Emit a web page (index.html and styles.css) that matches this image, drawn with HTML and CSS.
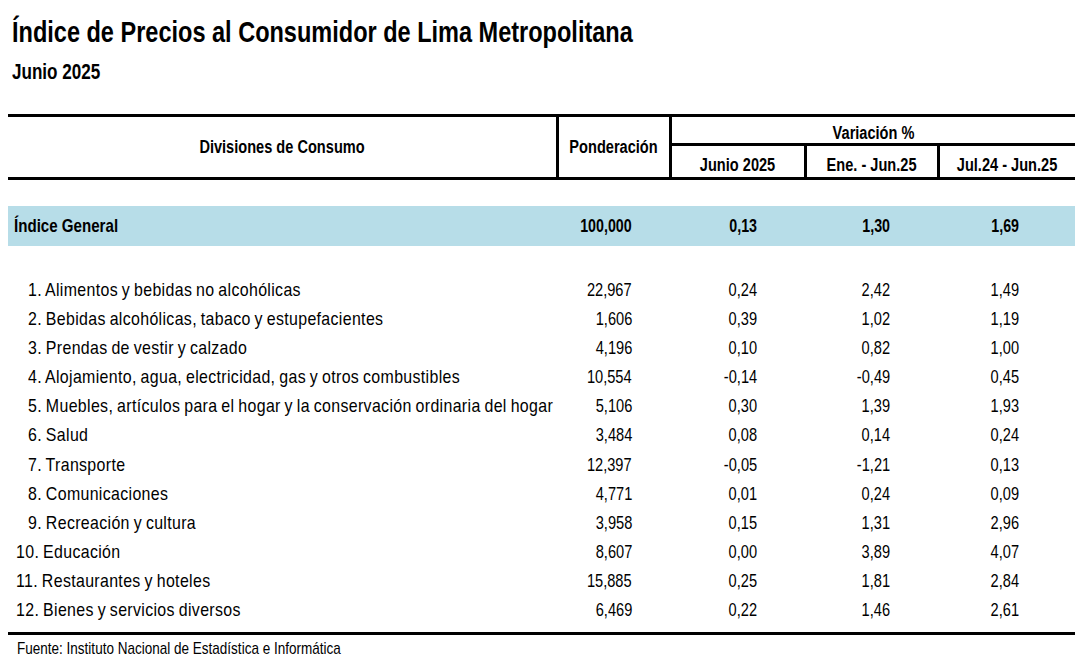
FILE: index.html
```html
<!DOCTYPE html>
<html lang="es">
<head>
<meta charset="utf-8">
<title>IPC Lima Metropolitana</title>
<link rel="stylesheet" href="styles.css">
</head>
<body>
<h1 class="title"><span class="t">Índice de Precios al Consumidor de Lima Metropolitana</span></h1>
<div class="subtitle"><span class="t">Junio 2025</span></div>
<table class="ipc">
  <colgroup>
    <col class="c-div"><col class="c-pond"><col class="c-m"><col class="c-e"><col class="c-j">
  </colgroup>
  <thead>
    <tr class="h1">
      <th rowspan="2" class="h-div"><span class="t">Divisiones de Consumo</span></th>
      <th rowspan="2" class="h-pond"><span class="t">Ponderación</span></th>
      <th colspan="3" class="h-var"><span class="t">Variación %</span></th>
    </tr>
    <tr class="h2">
      <th class="h-sub"><span class="t">Junio 2025</span></th>
      <th class="h-sub"><span class="t">Ene. - Jun.25</span></th>
      <th class="h-sub h-last"><span class="t">Jul.24 - Jun.25</span></th>
    </tr>
  </thead>
  <tbody>
    <tr class="gap1"><td colspan="5"></td></tr>
    <tr class="general">
      <td class="glbl"><span class="t">Índice General</span></td>
      <td class="n pond"><span class="t">100,000</span></td>
      <td class="n m"><span class="t">0,13</span></td>
      <td class="n e"><span class="t">1,30</span></td>
      <td class="n j"><span class="t">1,69</span></td>
    </tr>
    <tr class="gap2"><td colspan="5"></td></tr>
    <tr class="row"><td class="lbl one"><span class="t">1. Alimentos y bebidas no alcohólicas</span></td><td class="n pond"><span class="t">22,967</span></td><td class="n m"><span class="t">0,24</span></td><td class="n e"><span class="t">2,42</span></td><td class="n j"><span class="t">1,49</span></td></tr>
    <tr class="row"><td class="lbl one"><span class="t">2. Bebidas alcohólicas, tabaco y estupefacientes</span></td><td class="n pond"><span class="t">1,606</span></td><td class="n m"><span class="t">0,39</span></td><td class="n e"><span class="t">1,02</span></td><td class="n j"><span class="t">1,19</span></td></tr>
    <tr class="row"><td class="lbl one"><span class="t">3. Prendas de vestir y calzado</span></td><td class="n pond"><span class="t">4,196</span></td><td class="n m"><span class="t">0,10</span></td><td class="n e"><span class="t">0,82</span></td><td class="n j"><span class="t">1,00</span></td></tr>
    <tr class="row"><td class="lbl one"><span class="t">4. Alojamiento, agua, electricidad, gas y otros combustibles</span></td><td class="n pond"><span class="t">10,554</span></td><td class="n m"><span class="t">-0,14</span></td><td class="n e"><span class="t">-0,49</span></td><td class="n j"><span class="t">0,45</span></td></tr>
    <tr class="row"><td class="lbl one"><span class="t">5. Muebles, artículos para el hogar y la conservación ordinaria del hogar</span></td><td class="n pond"><span class="t">5,106</span></td><td class="n m"><span class="t">0,30</span></td><td class="n e"><span class="t">1,39</span></td><td class="n j"><span class="t">1,93</span></td></tr>
    <tr class="row"><td class="lbl one"><span class="t">6. Salud</span></td><td class="n pond"><span class="t">3,484</span></td><td class="n m"><span class="t">0,08</span></td><td class="n e"><span class="t">0,14</span></td><td class="n j"><span class="t">0,24</span></td></tr>
    <tr class="row"><td class="lbl one"><span class="t">7. Transporte</span></td><td class="n pond"><span class="t">12,397</span></td><td class="n m"><span class="t">-0,05</span></td><td class="n e"><span class="t">-1,21</span></td><td class="n j"><span class="t">0,13</span></td></tr>
    <tr class="row"><td class="lbl one"><span class="t">8. Comunicaciones</span></td><td class="n pond"><span class="t">4,771</span></td><td class="n m"><span class="t">0,01</span></td><td class="n e"><span class="t">0,24</span></td><td class="n j"><span class="t">0,09</span></td></tr>
    <tr class="row"><td class="lbl one"><span class="t">9. Recreación y cultura</span></td><td class="n pond"><span class="t">3,958</span></td><td class="n m"><span class="t">0,15</span></td><td class="n e"><span class="t">1,31</span></td><td class="n j"><span class="t">2,96</span></td></tr>
    <tr class="row"><td class="lbl two"><span class="t">10. Educación</span></td><td class="n pond"><span class="t">8,607</span></td><td class="n m"><span class="t">0,00</span></td><td class="n e"><span class="t">3,89</span></td><td class="n j"><span class="t">4,07</span></td></tr>
    <tr class="row"><td class="lbl two"><span class="t">11. Restaurantes y hoteles</span></td><td class="n pond"><span class="t">15,885</span></td><td class="n m"><span class="t">0,25</span></td><td class="n e"><span class="t">1,81</span></td><td class="n j"><span class="t">2,84</span></td></tr>
    <tr class="row"><td class="lbl two"><span class="t">12. Bienes y servicios diversos</span></td><td class="n pond"><span class="t">6,469</span></td><td class="n m"><span class="t">0,22</span></td><td class="n e"><span class="t">1,46</span></td><td class="n j"><span class="t">2,61</span></td></tr>
    <tr class="gap3"><td colspan="5"></td></tr>
  </tbody>
</table>
<p class="source"><span class="t">Fuente: Instituto Nacional de Estadística e Informática</span></p>
</body>
</html>
```

FILE: styles.css
```css
html, body {
  margin: 0;
  padding: 0;
  background: #ffffff;
  color: #000000;
}
body {
  width: 1075px;
  font-family: "Liberation Sans", Arial, sans-serif;
  overflow: hidden;
}
/* condensed text (Arial Narrow look) */
.t {
  display: inline-block;
  white-space: nowrap;
  transform-origin: left center;
}

.title {
  margin: 14px 0 0 12px;
  font-size: 30px;
  line-height: 36px;
  font-weight: bold;
}
.title .t { transform: scaleX(0.784); }

.subtitle {
  margin: 9px 0 0 12px;
  font-size: 22px;
  line-height: 26px;
  font-weight: bold;
}
.subtitle .t { transform: scaleX(0.776); }

.ipc {
  margin: 29px 0 0 8px;
  width: 1067px;
  border-collapse: collapse;
  table-layout: fixed;
}
.c-div { width: 549px; }
.c-pond { width: 113px; }
.c-m { width: 135px; }
.c-e { width: 133px; }
.c-j { width: 137px; }

.ipc th {
  font-weight: bold;
  font-size: 18px;
  line-height: 20px;
  padding: 0;
  text-align: center;
  vertical-align: middle;
}
.ipc th .t {
  transform-origin: center center;
  transform: scaleX(0.81);
}
.h1 th { border-top: 3px solid #000; }
.h-div { border-right: 3px solid #000; border-bottom: 3px solid #000; }
.h-pond { border-right: 3px solid #000; border-bottom: 3px solid #000; }
.h-var { height: 21px; border-bottom: 3px solid #000; }
.ipc th.h-var { padding-top: 5px; }
.h-sub { height: 25px; border-bottom: 3px solid #000; border-right: 3px solid #000; }
.ipc th.h-sub { padding-top: 6px; }
.h-sub.h-last { border-right: 0; }

.ipc td { padding: 0; }
.gap1 td { height: 26px; }
.gap2 td { height: 29px; }
.gap3 td { height: 7px; border-bottom: 3px solid #000; }

.general td {
  height: 40px;
  background: #b7dde8;
  font-weight: bold;
  font-size: 19px;
  line-height: 22px;
}
.ipc .glbl { padding-left: 6px; }
.glbl .t { transform: scaleX(0.795); }
.general .n .t { transform: scaleX(0.75); }

.row td {
  height: 29.18px;
  font-size: 18.5px;
  line-height: 20px;
}
.lbl .t {
  letter-spacing: 0.4px;
  word-spacing: -1px;
  transform: scaleX(0.86);
}
.ipc .lbl.one { padding-left: 20px; }
.ipc .lbl.two { padding-left: 8px; }

.n { text-align: right; }
.n .t {
  transform-origin: right center;
  transform: scaleX(0.79);
}
.ipc .n.pond { padding-right: 38px; }
.ipc .n.m { padding-right: 48px; }
.ipc .n.e { padding-right: 48px; }
.ipc .n.j { padding-right: 56px; }

.source {
  margin: 5px 0 0 17px;
  font-size: 17px;
  line-height: 18px;
}
.source .t { transform: scaleX(0.795); }
```
